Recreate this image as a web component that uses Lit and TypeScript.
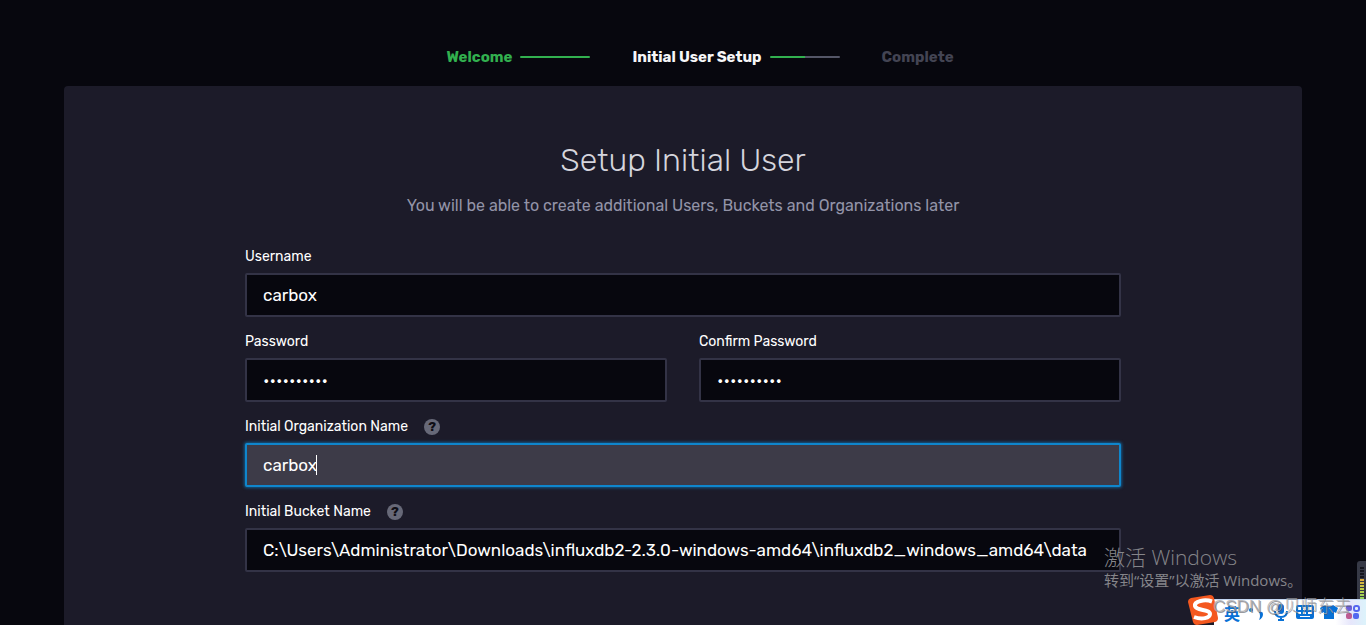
import { LitElement, html, css, svg, nothing } from "lit";
import { customElement, property } from "lit/decorators.js";

@customElement("progress-steps")
class ProgressSteps extends LitElement {
  static styles = css`
    :host { display: block; }
    .steps {
      display: flex;
      align-items: center;
      justify-content: center;
      gap: 42px;
      height: 86px;
      padding: 28px 0 0 34px;
      box-sizing: border-box;
      margin: 0;
      list-style: none;
      font-size: 15px;
      line-height: 58px;
      font-weight: 700;
    }
    .step { display: flex; align-items: center; gap: 8px; color: #434453; white-space: nowrap; }
    .done { color: #32b04f; }
    .current { color: #f6f6f8; }
    .line { width: 70px; height: 2px; border-radius: 1px; background: #32b04f; }
    .half { background: linear-gradient(to right, #32b04f 50%, #545667 50%); }
  `;
  render() {
    return html`<ol class="steps">
      <li class="step done">Welcome<span class="line"></span></li>
      <li class="step current">Initial User Setup<span class="line half"></span></li>
      <li class="step">Complete</li>
    </ol>`;
  }
}

@customElement("form-field")
class FormField extends LitElement {
  @property() label = "";
  @property() value = "";
  @property() type = "text";
  @property({ type: Boolean }) help = false;
  @property({ type: Boolean }) active = false;

  static styles = css`
    :host { display: block; min-width: 0; }
    .head { display: flex; align-items: center; gap: 16px; height: 33px; }
    .label { font-size: 14px; line-height: 32px; font-weight: 400; color: #fff; white-space: nowrap; }
    .help {
      width: 16px; height: 16px; padding: 0; border: 0; border-radius: 50%;
      background: #676978; color: #0f0e15;
      font: 700 13px/16px Rubik, Roboto, sans-serif; text-align: center;
    }
    .box { position: relative; }
    .input {
      display: block; width: 100%; height: 44px; box-sizing: border-box;
      padding: 0 16px; border: 2px solid #333346; border-radius: 2px;
      background: #07070e; color: #fff; outline: none;
      font: 400 17px/40px Rubik, Roboto, sans-serif;
    }
    .active { background: #3d3b48; border-color: #0f86cc; box-shadow: 0 0 3px 1px #0f86cc99; }
    .caret { position: absolute; left: 71px; top: 12px; width: 1px; height: 20px; background: #fff; }
  `;
  render() {
    return html`
      <div class="head">
        <label class="label" for="field">${this.label}</label>
        ${this.help ? html`<button class="help" type="button" aria-label="Help">?</button>` : nothing}
      </div>
      <div class="box">
        <input id="field" class="input ${this.active ? "active" : ""}" type=${this.type} .value=${this.value} autocomplete="off" spellcheck="false" />
        ${this.active ? html`<span class="caret"></span>` : nothing}
      </div>`;
  }
}

@customElement("ime-bar")
class ImeBar extends LitElement {
  static styles = css`
    :host { display: block; }
    .bar {
      position: relative; display: flex; align-items: center; height: 26px; width: 152px;
      box-sizing: border-box; padding-left: 10px; gap: 5px;
      background: linear-gradient(to right, #fff 80%, #e6e6fb 90%, #dcf3fb);
      border-top: 1px solid #c3d6f2;
    }
    .mode { width: 18px; font: 700 16px/22px "Noto Sans CJK SC", sans-serif; color: #0871d6; }
    .icon { width: 19px; height: 20px; flex: none; }
    .logo { position: absolute; left: -27px; top: -5px; width: 32px; height: 30px; }
    .mark {
      position: absolute; left: -1px; top: -7px; white-space: nowrap;
      font: 300 17px/28px "Liberation Sans", "Noto Sans CJK SC", sans-serif;
      color: #a9aaaecc; text-shadow: 1px 1px 0 #55565c99;
    }
  `;
  render() {
    const icon = (body: unknown) => html`<svg class="icon" viewBox="0 0 19 20" fill="#0871d6">${body}</svg>`;
    return html`<div class="bar">
      <svg class="logo" viewBox="0 0 32 30">
        <path d="M4 3 23 0q3 0 4 3l4 20q0 3-3 4L10 30q-3 0-4-3L1 7q0-3 3-4Z" fill="#f4581f"/>
        <path d="M25 6.500C18 4 7 6 8 11c1 5 15 3 15 8 0 4-8 6-16 3" fill="none" stroke="#fff" stroke-width="4"/>
      </svg>
      <span class="mode">英</span>
      ${icon(svg`<circle cx="4" cy="7" r="2"/><path d="M12 9q4-1 4 2 0 4-4 6 2-4 0-8Z"/>`)}
      ${icon(svg`<rect x="7" y="1" width="6" height="10" rx="3"/><path d="M4 8q0 6 6 6t6-6M10 14v4M7 17h6" fill="none" stroke="#0871d6" stroke-width="2"/>`)}
      ${icon(svg`<path fill-rule="evenodd" d="M3 2h14q2 0 2 2v10q0 2-2 2H3q-2 0-2-2V4q0-2 2-2Zm0 2v3h3V4Zm5 0v3h3V4Zm5 0v3h4V4ZM3 9v2h3V9Zm5 0v2h3V9Zm5 0v2h4V9ZM5 13v1h10v-1Z"/>`)}
      ${icon(svg`<path d="M6 2q4 3 8 0l5 3-2 5-2-1v7H5V9l-2 1-2-5Z"/>`)}
      <svg class="icon" viewBox="0 0 19 20">
        <rect x="3" y="2" width="6" height="6" rx="2" fill="#6d61da"/>
        <rect x="11" y="3" width="5" height="5" rx="2" fill="none" stroke="#5565f0" stroke-width="2"/>
        <rect x="3" y="10" width="6" height="6" rx="2" fill="#bd5b93"/>
        <rect x="10" y="10" width="6" height="6" rx="2" fill="#5468ef"/>
      </svg>
      <span class="mark">CSDN @贝师东去</span>
    </div>`;
  }
}

@customElement("app-root")
class AppRoot extends LitElement {
  static styles = css`
    :host {
      display: flex; flex-direction: column; position: relative; overflow: hidden;
      height: 100vh; background: #07070e; color: #d5d5dd;
      font-family: Rubik, Roboto, sans-serif;
    }
    .panel {
      flex: 1; margin: 0 64px; padding: 54px 181px 0;
      background: #1c1b29; border-radius: 4px 4px 0 0;
    }
    .title { margin: 0; text-align: center; font-size: 32px; line-height: 40px; font-weight: 300; color: #d5d5dd; }
    .intro { margin: 14px 0 0; text-align: center; font-size: 16px; line-height: 24px; color: #9394a8; }
    .form { display: grid; grid-template-columns: 1fr 1fr; gap: 8px 32px; margin-top: 22px; }
    .wide { grid-column: 1 / -1; }
    .notice {
      position: absolute; right: 58px; bottom: 35px; width: 204px;
      font-family: "Open Sans", "Noto Sans CJK SC", sans-serif; color: #85858a; white-space: nowrap;
    }
    .big { margin: 0; font-size: 21px; line-height: 26px; font-weight: 300; }
    .small { margin: 0; font-size: 15px; line-height: 20px; }
    .meter {
      position: absolute; right: 0; bottom: 26px; width: 9px; height: 38px; box-sizing: border-box;
      padding: 6px 2px 0 3px; background: #363946; border-radius: 3px 0 0 0;
    }
    .level {
      height: 32px;
      background: repeating-linear-gradient(to bottom, transparent 0 2px, #363946 2px 3px),
        linear-gradient(to bottom, #15161e 12px, #e0a83c 12px, #b8d24a 24px, #8fd060);
    }
    .ime { position: absolute; right: 0; bottom: 0; }
  `;
  render() {
    return html`
      <progress-steps></progress-steps>
      <main class="panel">
        <h1 class="title">Setup Initial User</h1>
        <p class="intro">You will be able to create additional Users, Buckets and Organizations later</p>
        <form class="form">
          <form-field class="wide" label="Username" value="carbox"></form-field>
          <form-field label="Password" type="password" value="carbox1234"></form-field>
          <form-field label="Confirm Password" type="password" value="carbox1234"></form-field>
          <form-field class="wide" label="Initial Organization Name" value="carbox" help active></form-field>
          <form-field class="wide" label="Initial Bucket Name" help
            value="C:\\Users\\Administrator\\Downloads\\influxdb2-2.3.0-windows-amd64\\influxdb2_windows_amd64\\data"></form-field>
        </form>
      </main>
      <aside class="notice">
        <p class="big">激活 Windows</p>
        <p class="small">转到“设置”以激活 Windows。</p>
      </aside>
      <div class="meter"><div class="level"></div></div>
      <ime-bar class="ime"></ime-bar>`;
  }
}
